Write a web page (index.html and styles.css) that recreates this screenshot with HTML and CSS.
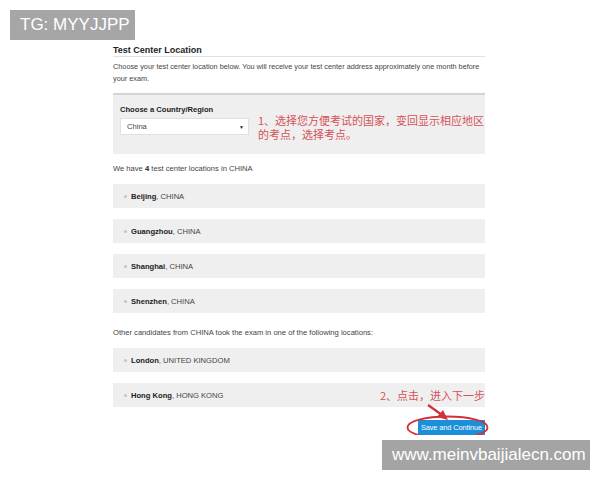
FILE: index.html
```html
<!DOCTYPE html>
<html>
<head>
<meta charset="utf-8">
<link rel="stylesheet" href="styles.css">
</head>
<body>
<div class="tag">TG: MYYJJPP</div>
<main class="page">
  <h1 class="title">Test Center Location</h1>
  <p class="intro">Choose your test center location below. You will receive your test center address approximately one month before your exam.</p>
  <section class="panel">
    <div class="field">
      <div class="label">Choose a Country/Region</div>
      <div class="select"><span>China</span><span class="caret">▼</span></div>
    </div>
    <div class="note note1">1、选择您方便考试的国家，变回显示相应地区的考点，选择考点。</div>
  </section>
  <p class="info">We have <b>4</b> test center locations in CHINA</p>
  <ul class="list">
    <li class="row"><i class="dot"></i><b>Beijing</b>, CHINA</li>
    <li class="row"><i class="dot"></i><b>Guangzhou</b>, CHINA</li>
    <li class="row"><i class="dot"></i><b>Shanghai</b>, CHINA</li>
    <li class="row"><i class="dot"></i><b>Shenzhen</b>, CHINA</li>
  </ul>
  <p class="info other">Other candidates from CHINA took the exam in one of the following locations:</p>
  <ul class="list">
    <li class="row"><i class="dot"></i><b>London</b>, UNITED KINGDOM</li>
    <li class="row hk"><i class="dot"></i><b>Hong Kong</b>, HONG KONG<span class="note note2">2、点击，进入下一步</span></li>
  </ul>
  <div class="actions">
    <button class="btn">Save and Continue</button>
    <svg class="mark" width="90" height="40" viewBox="0 0 90 40">
      <ellipse cx="49.5" cy="22.5" rx="40" ry="11" fill="none" stroke="#d2303a" stroke-width="1.8"/>
      <line x1="30" y1="0" x2="44" y2="10" stroke="#d2303a" stroke-width="2.2"/>
      <polygon points="50,15 39,12 45,5" fill="#d2303a"/>
    </svg>
  </div>
</main>
<div class="site">www.meinvbaijialecn.com</div>
</body>
</html>
```

FILE: styles.css
```css
html, body {
  margin: 0;
  padding: 0;
  background: #ffffff;
  font-family: "Liberation Sans", Arial, sans-serif;
  color: #444;
}
.tag {
  position: absolute;
  left: 10px;
  top: 10px;
  width: 125px;
  height: 30px;
  background: #a6a6a6;
  color: #fff;
  font-size: 17px;
  line-height: 30px;
  padding-left: 10px;
  box-sizing: border-box;
}
.site {
  position: absolute;
  left: 382px;
  top: 440px;
  width: 208px;
  height: 30px;
  background: #a4a4a4;
  color: #fff;
  font-size: 17px;
  line-height: 30px;
  padding-left: 10px;
  box-sizing: border-box;
}
.page {
  width: 372px;
  margin-left: 113px;
  padding-top: 44px;
}
.title {
  margin: 0;
  font-size: 9px;
  line-height: 12px;
  font-weight: bold;
  color: #222;
  border-bottom: 1px solid #e2e2e2;
}
.intro {
  margin: 4px 0 0;
  font-size: 7.3px;
  line-height: 12px;
}
.panel {
  margin-top: 8px;
  height: 50px;
  border-top: 2px solid #d4d4d4;
  background: #efefef;
  display: flex;
  padding: 9px 0 0 7px;
}
.field {
  width: 129px;
  flex: none;
}
.label {
  font-size: 7.6px;
  line-height: 12px;
  font-weight: bold;
  color: #222;
}
.select {
  margin-top: 2px;
  height: 17px;
  background: #fff;
  border: 1px solid #e0e0e0;
  box-sizing: border-box;
  display: flex;
  align-items: center;
  justify-content: space-between;
  padding: 0 4px 0 6px;
  font-size: 7.6px;
  color: #444;
}
.caret {
  font-size: 5px;
  color: #222;
}
.note {
  color: #d55258;
  font-family: "Noto Sans CJK SC", sans-serif;
  font-size: 11px;
  line-height: 14px;
}
.note1 {
  margin: 9px 0 0 9px;
  width: 230px;
}
.info {
  margin: 9px 0 0;
  font-size: 7.6px;
  line-height: 12px;
}
.info b { color: #222; }
.other { margin-top: 14px; }
.list {
  list-style: none;
  margin: 9px 0 0;
  padding: 0;
  display: flex;
  flex-direction: column;
  gap: 11px;
}
.row {
  height: 24px;
  background: #efefef;
  display: flex;
  align-items: center;
  padding-left: 11px;
  font-size: 7.6px;
  color: #444;
  position: relative;
}
.row b {
  color: #222;
}
.dot {
  width: 3px;
  height: 3px;
  border-radius: 50%;
  background: #c4c4c4;
  margin-right: 4px;
}
.note2 {
  position: absolute;
  right: 0;
  top: 5px;
}
.actions {
  margin-top: 13px;
  display: flex;
  justify-content: flex-end;
  position: relative;
}
.btn {
  width: 67px;
  height: 15px;
  border: 0;
  padding: 0;
  background: #1b8fd8;
  color: #fff;
  font-family: "Liberation Sans", Arial, sans-serif;
  font-size: 7.4px;
  letter-spacing: -0.1px;
}
.mark {
  position: absolute;
  right: -3px;
  top: -15px;
  overflow: visible;
}
```
